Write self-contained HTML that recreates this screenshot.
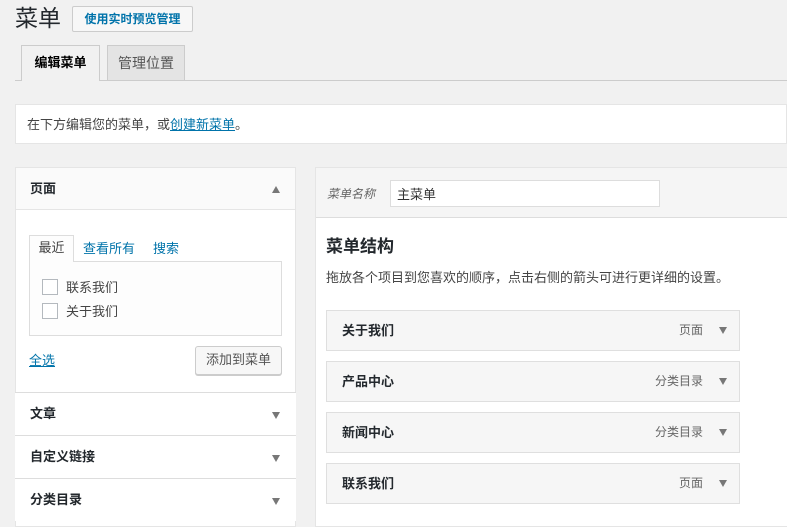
<!DOCTYPE html>
<html><head><meta charset="utf-8"><style>
*{box-sizing:border-box;margin:0;padding:0}
body{width:787px;height:522px;overflow:hidden;background:#f1f1f1;font-family:"Liberation Sans","Noto Sans CJK SC",sans-serif;font-size:13px;color:#444;position:relative;line-height:1.2}
.a{position:absolute}
.blue{color:#0073aa}
.tri{position:absolute;width:0;height:0;border-left:4px solid transparent;border-right:4px solid transparent;border-top:7px solid #777}
.up{border-top:none;border-bottom:7px solid #777}
.sec{position:absolute;left:15px;width:281px;height:43px;border-top:1px solid #ddd;background:#fff}
.sec b{position:absolute;left:15px;top:13px;font-size:13px;color:#23282d}
.item{position:absolute;left:326px;width:414px;height:41px;background:#f6f6f6;border:1px solid #dfdfdf}
.item b{position:absolute;left:15px;top:12px;color:#23282d;font-size:13px}
.item span{position:absolute;right:36px;top:12px;color:#666;font-size:12px}
.cb{position:absolute;left:42px;width:16px;height:16px;border:1px solid #b4b9be;background:#fff}
</style></head><body>
<div class="a" style="left:15px;top:5px;font-size:23px;color:#23282d">菜单</div>
<div class="a" style="left:72px;top:6px;width:121px;height:26px;border:1px solid #ccc;background:#f7f7f7;border-radius:2px;font-size:12px;font-weight:bold;color:#0073aa;text-align:center;line-height:24px">使用实时预览管理</div>
<div class="a" style="left:15px;top:80px;width:772px;height:1px;background:#ccc"></div>
<div class="a" style="left:21px;top:45px;width:79px;height:36px;border:1px solid #ccc;border-bottom:none;background:#f1f1f1;font-weight:bold;color:#000;text-align:center;line-height:34px">编辑菜单</div>
<div class="a" style="left:107px;top:45px;width:78px;height:35px;border:1px solid #ccc;border-bottom:none;background:#e4e4e4;font-size:14px;color:#555;text-align:center;line-height:34px">管理位置</div>
<div class="a" style="left:15px;top:104px;width:772px;height:40px;background:#fff;border:1px solid #e5e5e5;padding:12px 11px;font-size:13px;color:#444">在下方编辑您的菜单，或<span class="blue" style="text-decoration:underline">创建新菜单</span>。</div>
<div class="a" style="left:15px;top:167px;width:281px;height:360px;background:#fff;border:1px solid #e5e5e5"></div>
<div class="a" style="left:16px;top:168px;width:279px;height:42px;background:#fafafa;border-bottom:1px solid #e5e5e5"></div>
<b class="a" style="left:30px;top:181px;color:#23282d">页面</b>
<div class="tri up" style="left:272px;top:186px"></div>
<div class="a" style="left:29px;top:235px;width:45px;height:27px;border:1px solid #ddd;border-bottom:none;background:#fdfdfd;z-index:2;text-align:center;line-height:24px">最近</div>
<div class="a blue" style="left:83px;top:241px">查看所有</div>
<div class="a blue" style="left:153px;top:241px">搜索</div>
<div class="a" style="left:29px;top:261px;width:253px;height:75px;border:1px solid #ddd;background:#fdfdfd"></div>
<div class="cb" style="top:279px"></div><div class="a" style="left:66px;top:280px">联系我们</div>
<div class="cb" style="top:303px"></div><div class="a" style="left:66px;top:304px">关于我们</div>
<div class="a blue" style="left:29px;top:353px;text-decoration:underline">全选</div>
<div class="a" style="left:195px;top:346px;width:87px;height:29px;border:1px solid #ccc;background:#f7f7f7;border-radius:3px;box-shadow:0 1px 0 #ccc;text-align:center;line-height:26px;color:#555">添加到菜单</div>
<div class="sec" style="top:392px"><b>文章</b><div class="tri" style="left:257px;top:19px"></div></div>
<div class="sec" style="top:435px"><b>自定义链接</b><div class="tri" style="left:257px;top:19px"></div></div>
<div class="sec" style="top:478px"><b>分类目录</b><div class="tri" style="left:257px;top:19px"></div></div>
<div class="a" style="left:315px;top:167px;width:480px;height:360px;background:#fff;border:1px solid #e5e5e5"></div>
<div class="a" style="left:316px;top:168px;width:471px;height:50px;background:#f5f5f5;border-bottom:1px solid #ddd"></div>
<div class="a" style="left:327px;top:187px;font-style:italic;color:#666;font-size:12px">菜单名称</div>
<div class="a" style="left:390px;top:180px;width:270px;height:27px;background:#fff;border:1px solid #ddd;padding:6px 6px;color:#333">主菜单</div>
<div class="a" style="left:326px;top:237px;font-size:17px;font-weight:bold;color:#23282d">菜单结构</div>
<div class="a" style="left:326px;top:270px;color:#444">拖放各个项目到您喜欢的顺序，点击右侧的箭头可进行更详细的设置。</div>
<div class="item" style="top:310px"><b>关于我们</b><span>页面</span><div class="tri" style="left:392px;top:16px"></div></div>
<div class="item" style="top:361px"><b>产品中心</b><span>分类目录</span><div class="tri" style="left:392px;top:16px"></div></div>
<div class="item" style="top:412px"><b>新闻中心</b><span>分类目录</span><div class="tri" style="left:392px;top:16px"></div></div>
<div class="item" style="top:463px"><b>联系我们</b><span>页面</span><div class="tri" style="left:392px;top:16px"></div></div>
</body></html>
